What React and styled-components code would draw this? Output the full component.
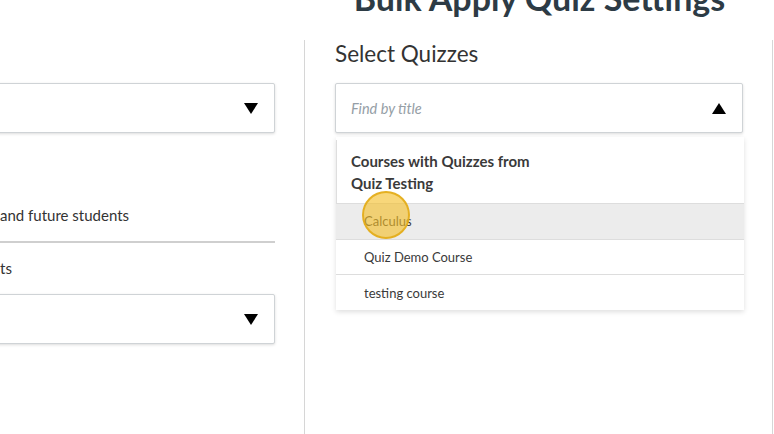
import React from "react";
import styled, { createGlobalStyle } from "styled-components";

const Global = createGlobalStyle`
  html, body {
    margin: 0;
    padding: 0;
    background: #fff;
    overflow: hidden;
  }
  body {
    font-family: Lato, "Noto Sans", sans-serif;
    color: #333;
  }
`;

function Caret({ up }) {
  return (
    <svg width="14" height="11" viewBox="0 0 14 11">
      {up ? <polygon points="7,0 14,11 0,11" fill="#000" /> : <polygon points="0,0 14,0 7,11" fill="#000" />}
    </svg>
  );
}

export default function App() {
  return (
    <Page>
      <Global />
      <Title>Bulk Apply Quiz Settings</Title>
      <Columns>
        <LeftCol>
          <SelectBox>
            <span />
            <Caret />
          </SelectBox>
          <OptionText $top={72}>
            <Hidden>Apply to current&nbsp;</Hidden>and future students
          </OptionText>
          <Rule />
          <OptionText $top={15}>
            <Hidden>Apply to current studen</Hidden>ts
          </OptionText>
          <SelectBox $top={16}>
            <span />
            <Caret />
          </SelectBox>
        </LeftCol>
        <RightCol>
          <Heading>Select Quizzes</Heading>
          <SelectBox $wide>
            <Placeholder>Find by title</Placeholder>
            <Caret up />
          </SelectBox>
          <Menu>
            <GroupHeader>
              Courses with Quizzes from
              <br />
              Quiz Testing
            </GroupHeader>
            <Item $active>
              Calculus
              <Cursor />
            </Item>
            <Item>Quiz Demo Course</Item>
            <Item>testing course</Item>
          </Menu>
        </RightCol>
      </Columns>
    </Page>
  );
}

const Page = styled.div`
  width: 774px;
  height: 434px;
  display: flex;
  flex-direction: column;
`;

const Title = styled.h1`
  margin: -25px 0 0 306px;
  width: 467px;
  text-align: center;
  font-size: 34px;
  line-height: 46px;
  font-weight: 700;
  color: #2d3b45;
  white-space: nowrap;
`;

const Columns = styled.div`
  display: grid;
  grid-template-columns: 305px 468px;
  margin-top: 19px;
  flex: 1;
`;

const LeftCol = styled.div`
  border-right: 1px solid #d6d6d6;
  padding: 43px 29px 0 0;
  display: flex;
  flex-direction: column;
`;

const RightCol = styled.div`
  border-right: 1px solid #d6d6d6;
  padding: 0 29px 0 30px;
  display: flex;
  flex-direction: column;
`;

const SelectBox = styled.div`
  box-sizing: border-box;
  height: 50px;
  margin-top: ${(p) => (p.$top ? p.$top + "px" : "0")};
  margin-left: ${(p) => (p.$wide ? "0" : "-20px")};
  border: 1px solid #cfd3d6;
  border-radius: 2px;
  box-shadow: 0 1px 3px rgba(0, 0, 0, 0.14);
  background: #fff;
  display: flex;
  align-items: center;
  justify-content: space-between;
  padding: 0 16px 0 15px;
`;

const Placeholder = styled.span`
  font-style: italic;
  font-size: 14.5px;
  color: #959ea6;
`;

const OptionText = styled.div`
  margin-top: ${(p) => p.$top}px;
  font-size: 15px;
  line-height: 20px;
  color: #333;
  white-space: nowrap;
`;

const Hidden = styled.span`
  display: inline-flex;
  width: 0;
  justify-content: flex-end;
  white-space: nowrap;
`;

const Rule = styled.div`
  margin-top: 16px;
  margin-left: -20px;
  height: 2px;
  background: #cfcfcf;
`;

const Heading = styled.h2`
  margin: 1px 0 16px;
  font-size: 22.5px;
  line-height: 26px;
  font-weight: 400;
  color: #333;
`;

const Menu = styled.div`
  margin-top: 4px;
  margin-left: 1px;
  margin-right: -1px;
  background: #fff;
  box-shadow: 0 2px 5px rgba(0, 0, 0, 0.13);
  display: flex;
  flex-direction: column;
`;

const GroupHeader = styled.div`
  padding: 10px 14px 9px;
  font-size: 15px;
  font-weight: 700;
  line-height: 22px;
  color: #3a3a3a;
  border-left: 1px solid #dedede;
  margin: 3px 0 0;
`;

const Item = styled.div`
  position: relative;
  height: 35.7px;
  box-sizing: border-box;
  border-top: 1px solid #dddddd;
  background: ${(p) => (p.$active ? "#ececec" : "#fff")};
  padding-left: 28px;
  display: flex;
  align-items: center;
  font-size: 13px;
  color: #3a3a3a;
`;

const Cursor = styled.span`
  position: absolute;
  left: 26px;
  top: -13px;
  width: 48px;
  height: 48px;
  border-radius: 50%;
  background: rgba(244, 190, 40, 0.62);
  border: 2px solid rgba(226, 170, 20, 0.85);
  box-sizing: border-box;
`;
